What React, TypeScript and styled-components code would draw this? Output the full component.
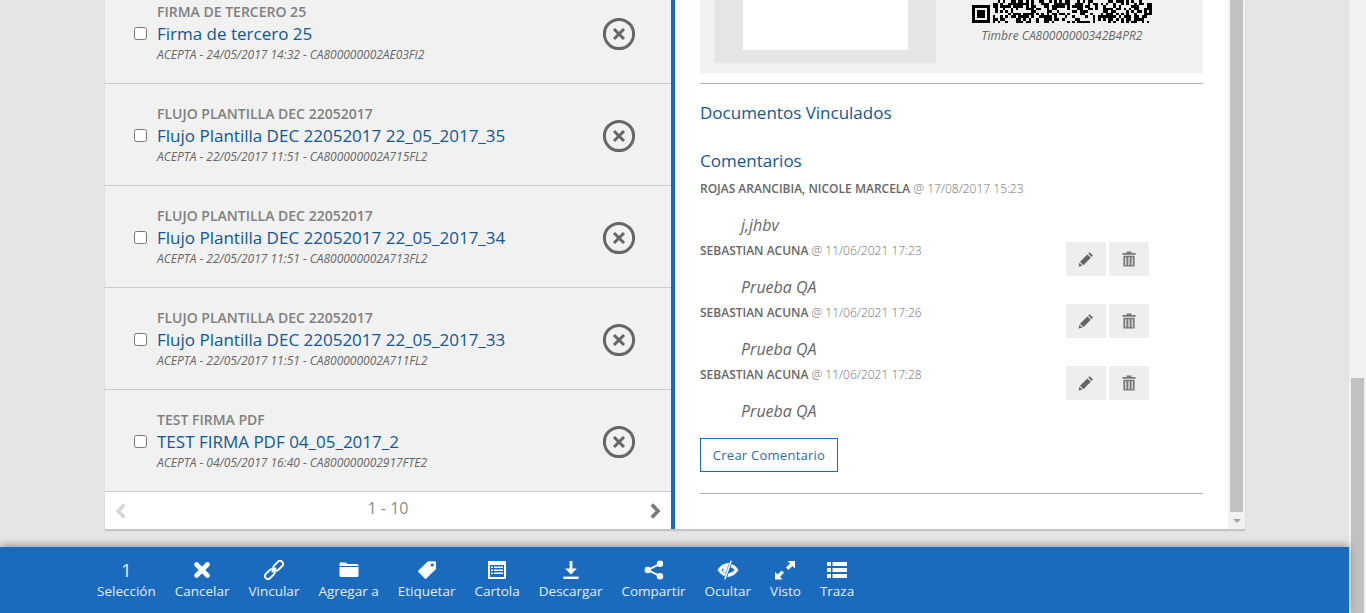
import React from 'react'
import type { ReactElement, ReactNode } from 'react'
import styled, { createGlobalStyle } from 'styled-components'

const GlobalStyle = createGlobalStyle`
    html, body {
        margin: 0;
        padding: 0;
        height: 100%;
        overflow: hidden;
        background: #e5e5e5;
        font-family: "Open Sans", "Liberation Sans", sans-serif;
    }
`

const Page = styled.div`
    display: flex;
    width: 1366px;
    height: 613px;
    overflow: hidden;
`

const Viewport = styled.div`
    display: flex;
    flex-direction: column;
    width: 1349px;
`

const Content = styled.div`
    flex: 1;
    padding-left: 105px;
    min-height: 0;
`

const Panel = styled.div`
    display: flex;
    width: 1140px;
    height: 529px;
    box-shadow: 0 2px 1px #c4c4c4;
`

const ListColumn = styled.div`
    display: flex;
    flex-direction: column;
    width: 566px;
    height: 529px;
    background: #fff;
    overflow: hidden;
    border-right: 4px solid #1a6bbd;
    flex-shrink: 0;
`

const List = styled.div`
    flex: 1;
    min-height: 0;
    margin-top: -18px;
`

const Row = styled.div`
    display: flex;
    align-items: center;
    box-sizing: border-box;
    height: 102px;
    padding: 2px 35px 0 29px;
    background: #f1f1f1;
    border-bottom: 1px solid #ccc;
`

const RowCheck = styled.input`
    width: 13px;
    height: 13px;
    margin: 0 10px 0 0;
    flex-shrink: 0;
`

const RowText = styled.div`
    flex: 1;
    min-width: 0;
    margin-bottom: 1px;
`

const RowTitle = styled.div`
    font-size: 14px;
    line-height: 18px;
    font-weight: 600;
    color: #808080;
    margin-bottom: 1px;
`

const RowName = styled.div`
    font-size: 17px;
    line-height: 24px;
    color: #0f5797;
`

const RowMeta = styled.div`
    margin-top: 1px;
    font-size: 12px;
    line-height: 16px;
    font-style: italic;
    letter-spacing: -0.02px;
    color: #666;
`

const Pager = styled.div`
    display: flex;
    align-items: center;
    justify-content: space-between;
    height: 37px;
    padding: 0 9px;
    flex-shrink: 0;
    font-size: 16px;
    color: #8a8a8a;
`

const PagerLabel = styled.span`
    margin-bottom: 5px;
`

const DetailColumn = styled.div`
    flex: 1;
    min-width: 0;
    box-sizing: border-box;
    padding: 0 25px;
    background: #fff;
    overflow: hidden;
`

const StampBox = styled.div`
    display: flex;
    height: 73px;
    background: #f1f1f1;
    padding-left: 15px;
`

const SignBox = styled.div`
    display: flex;
    justify-content: center;
    width: 221px;
    height: 63px;
    background: #e5e5e5;
`

const SignSheet = styled.div`
    width: 165px;
    height: 50px;
    background: #fff;
`

const StampCode = styled.div`
    display: flex;
    flex-direction: column;
    align-items: center;
    margin-left: 36px;
    width: 180px;
`

const StampCaption = styled.div`
    margin-top: 5px;
    font-size: 12px;
    line-height: 16px;
    font-style: italic;
    color: #666;
    white-space: nowrap;
`

const Rule = styled.div<{ $top: number }>`
    height: 1px;
    margin-top: ${(p) => p.$top}px;
    background: #b3b3b3;
`

const SectionTitle = styled.div<{ $top: number }>`
    margin-top: ${(p) => p.$top}px;
    font-size: 17px;
    line-height: 24px;
    color: #0f5797;
`

const Comments = styled.div`
    margin-top: 7px;
`

const CommentHead = styled.div`
    display: flex;
    justify-content: space-between;
    height: 34px;
    padding-right: 54px;
`

const CommentMeta = styled.div`
    padding-top: 1px;
    font-size: 12px;
    line-height: 16px;
    font-weight: 300;
    color: #6f6f6f;
`

const CommentAuthor = styled.span`
    font-weight: 600;
    color: #666;
`

const CommentBody = styled.div`
    height: 22px;
    margin-bottom: 6px;
    padding-left: 41px;
    font-size: 16px;
    line-height: 22px;
    font-style: italic;
    color: #666;
`

const CommentActions = styled.div`
    display: flex;
    gap: 3px;
`

const ActionButton = styled.div`
    display: flex;
    align-items: center;
    justify-content: center;
    width: 40px;
    height: 34px;
    background: #eee;
`

const CreateButton = styled.div`
    display: flex;
    align-items: center;
    justify-content: center;
    box-sizing: border-box;
    width: 138px;
    height: 34px;
    margin-top: 16px;
    border: 1px solid #1a6bbd;
    font-size: 13px;
    letter-spacing: 0.25px;
    color: #2b6cab;
`

const ScrollTrack = styled.div<{ $width: number }>`
    display: flex;
    flex-direction: column;
    width: ${(p) => p.$width}px;
    flex-shrink: 0;
    box-sizing: border-box;
    background: #f1f1f1;
    padding: 0 2px;
`

const ScrollGap = styled.div`
    height: 378px;
`

const ScrollThumb = styled.div`
    flex: 1;
    background: #c1c1c1;
`

const ScrollArrow = styled.div`
    display: flex;
    align-items: center;
    justify-content: center;
    height: 17px;
`

const ArrowGlyph = styled.div`
    width: 0;
    height: 0;
    border-left: 4px solid transparent;
    border-right: 4px solid transparent;
    border-top: 4px solid #a3a3a3;
`

const Footer = styled.div`
    display: flex;
    gap: 19px;
    height: 66px;
    box-sizing: border-box;
    padding: 11px 0 0 97px;
    flex-shrink: 0;
    background: #1a6bbd;
    box-shadow: 0 -2px 8px rgba(0, 0, 0, 0.35);
    position: relative;
`

const Tool = styled.div`
    display: flex;
    flex-direction: column;
    align-items: center;
    color: #fff;
`

const ToolIcon = styled.div`
    display: flex;
    align-items: center;
    justify-content: center;
    height: 24px;
    font-size: 19px;
    line-height: 24px;
    color: #e8f0f8;
`

const ToolLabel = styled.div`
    margin-top: -1px;
    font-size: 13.5px;
    line-height: 20px;
    color: #e3ecf6;
    white-space: nowrap;
`

const Glyph = ({ size, width, fill, children }: { size: number, width?: number, fill: string, children: ReactNode }): ReactElement => (
    <svg width={width ?? size} height={size} viewBox={`0 0 ${width ?? size} ${size}`} fill={fill} style={{ display: 'block' }}>
        {children}
    </svg>
)

const IconClose = (): ReactElement => (
    <Glyph size={34} fill="none">
        <circle cx="17" cy="17" r="14.6" stroke="#666" strokeWidth="3" />
        <path d="M12 12 L22 22 M22 12 L12 22" stroke="#666" strokeWidth="3" />
    </Glyph>
)

const IconPencil = (): ReactElement => (
    <Glyph size={16} fill="#666">
        <path d="M11.6 1.2 L15 4.6 L13.6 6 L10.2 2.6 Z M9.4 3.4 L12.8 6.8 L5.4 14.2 L2 10.8 Z M1.4 11.8 L4.4 14.8 L0.6 15.6 Z" />
    </Glyph>
)

const IconTrash = (): ReactElement => (
    <Glyph size={16} fill="#777">
        <path d="M5.6 0.6 H10.4 V2 H14.6 V3.8 H1.4 V2 H5.6 Z" />
        <path d="M2.4 4.8 H13.6 V15.6 H2.4 Z M4.2 6.2 V14.2 H5.4 V6.2 Z M7.4 6.2 V14.2 H8.6 V6.2 Z M10.6 6.2 V14.2 H11.8 V6.2 Z" fillRule="evenodd" />
    </Glyph>
)

const IconChevron = ({ left, color }: { left?: boolean, color: string }): ReactElement => (
    <Glyph size={16} width={14} fill="none">
        <path d={left ? 'M10.4 1.6 L4.2 8 L10.4 14.4' : 'M3.8 1.6 L10 8 L3.8 14.4'} stroke={color} strokeWidth="3.6" />
    </Glyph>
)

const IconCancel = (): ReactElement => (
    <Glyph size={20} fill="none">
        <path d="M4.5 4.5 L15.5 15.5 M15.5 4.5 L4.5 15.5" stroke="#fff" strokeWidth="4.6" strokeLinecap="round" />
    </Glyph>
)

const IconLink = (): ReactElement => (
    <Glyph size={20} fill="none">
        <g stroke="#fff" strokeWidth="2" transform="rotate(-45 10 10)">
            <rect x="-1.5" y="7" width="11" height="6" rx="3" />
            <rect x="10.5" y="7" width="11" height="6" rx="3" />
            <path d="M7 10 H13" />
        </g>
    </Glyph>
)

const IconFolder = (): ReactElement => (
    <Glyph size={20} fill="#fff">
        <path d="M0.5 3.5 Q0.5 2.5 1.5 2.5 H7 L8.5 4 H17.5 Q19.5 4 19.5 5.5 V6 H0.5 Z" />
        <path d="M0.5 7 H19.5 V16 Q19.5 17 18 17 H2 Q0.5 17 0.5 16 Z" />
    </Glyph>
)

const IconTag = (): ReactElement => (
    <Glyph size={20} fill="#fff">
        <path fillRule="evenodd" d="M11 1.2 H18 Q19 1.2 19 2.2 V9 L9.4 18.4 Q8.6 19.2 7.8 18.4 L1.4 12 Q0.6 11.2 1.4 10.4 Z M15.2 3.4 A1.6 1.6 0 1 0 15.21 3.4 Z" />
    </Glyph>
)

const IconStatement = (): ReactElement => (
    <Glyph size={20} fill="#fff">
        <path fillRule="evenodd" d="M1 1 H19 V19 H1 Z M3 5 V17 H17 V5 Z" />
        <path d="M4 6.5 H6 V8 H4 Z M7 6.5 H16 V8 H7 Z M4 9.5 H6 V11 H4 Z M7 9.5 H16 V11 H7 Z M4 12.5 H6 V14 H4 Z M7 12.5 H16 V14 H7 Z" />
    </Glyph>
)

const IconDownload = (): ReactElement => (
    <Glyph size={20} fill="#fff">
        <path d="M8.6 1 H11.4 V8.5 H15.8 L10 14.4 L4.2 8.5 H8.6 Z" />
        <rect x="2.4" y="16.6" width="15.2" height="2.4" />
    </Glyph>
)

const IconShare = (): ReactElement => (
    <Glyph size={20} fill="#fff">
        <circle cx="16" cy="3.8" r="3.2" />
        <circle cx="16" cy="16.2" r="3.2" />
        <circle cx="3.8" cy="10" r="3.2" />
        <path d="M3.8 10 L16 3.8 M3.8 10 L16 16.2" stroke="#fff" strokeWidth="1.9" />
    </Glyph>
)

const IconEyeOff = (): ReactElement => (
    <Glyph size={20} width={22} fill="#fff">
        <path fillRule="evenodd" d="M0.5 10 Q4.6 3.6 11 3 Q17.4 3.6 21.5 10 Q17.4 16.4 11 17 Q4.6 16.4 0.5 10 Z M11 6.6 Q15.4 7.2 17.8 10 Q15.4 12.8 11 13.4 Q6.6 12.8 4.2 10 Q6.6 7.2 11 6.6 Z" />
        <circle cx="9.2" cy="9.6" r="3" />
        <path d="M14.4 0.8 L8 19.2" stroke="#1a6bbd" strokeWidth="2.8" />
        <path d="M14.2 0.8 L7.8 19.2" stroke="#fff" strokeWidth="1.5" />
    </Glyph>
)

const IconExpand = (): ReactElement => (
    <Glyph size={20} width={22} fill="#fff">
        <path d="M13.4 1 H21 V8.6 L18.4 6 L14.4 10 L12 7.6 L16 3.6 Z" />
        <path d="M1 19.4 V11.8 L3.6 14.4 L7.6 10.4 L10 12.8 L6 16.8 L8.6 19.4 Z" />
    </Glyph>
)

const IconList = (): ReactElement => (
    <Glyph size={20} width={20} fill="#fff">
        <path d="M0 2 H4 V6 H0 Z M5.5 2 H20 V6 H5.5 Z M0 8 H4 V12 H0 Z M5.5 8 H20 V12 H5.5 Z M0 14 H4 V18 H0 Z M5.5 14 H20 V18 H5.5 Z" />
    </Glyph>
)

// visible bottom rows of the code, the rest is scrolled away
const qrCells = (): ReactElement[] => {
    const cell = 180 / 70
    const cells: ReactElement[] = []
    let seed = 4217
    for (let y = 0; y < 9; y++) {
        let on = false
        for (let x = 8; x < 70; x++) {
            seed = (seed * 1103 + 12345) % 65536
            if ((seed >> 4) % 100 < 55) on = !on
            if (on) {
                cells.push(<rect key={`${x}-${y}`} x={x * cell} y={y * cell} width={cell} height={cell} />)
            }
        }
    }
    return cells
}

const StampQr = (): ReactElement => (
    <svg width="180" height="23" viewBox="0 0 180 23" fill="#000" shapeRendering="crispEdges" style={{ display: 'block' }}>
        <path fillRule="evenodd" d="M0 5 H18 V23 H0 Z M2.6 7.6 V20.4 H15.4 V7.6 Z" />
        <rect x="5.2" y="10.2" width="7.7" height="7.7" />
        {qrCells()}
    </svg>
)

const rows = [
    { title: 'FIRMA DE TERCERO 25', name: 'Firma de tercero 25', meta: 'ACEPTA - 24/05/2017 14:32 - CA800000002AE03FI2' },
    { title: 'FLUJO PLANTILLA DEC 22052017', name: 'Flujo Plantilla DEC 22052017 22_05_2017_35', meta: 'ACEPTA - 22/05/2017 11:51 - CA800000002A715FL2' },
    { title: 'FLUJO PLANTILLA DEC 22052017', name: 'Flujo Plantilla DEC 22052017 22_05_2017_34', meta: 'ACEPTA - 22/05/2017 11:51 - CA800000002A713FL2' },
    { title: 'FLUJO PLANTILLA DEC 22052017', name: 'Flujo Plantilla DEC 22052017 22_05_2017_33', meta: 'ACEPTA - 22/05/2017 11:51 - CA800000002A711FL2' },
    { title: 'TEST FIRMA PDF', name: 'TEST FIRMA PDF 04_05_2017_2', meta: 'ACEPTA - 04/05/2017 16:40 - CA800000002917FTE2' },
]

const comments = [
    { author: 'ROJAS ARANCIBIA, NICOLE MARCELA', date: '17/08/2017 15:23', body: 'j,jhbv', own: false },
    { author: 'SEBASTIAN ACUNA', date: '11/06/2021 17:23', body: 'Prueba QA', own: true },
    { author: 'SEBASTIAN ACUNA', date: '11/06/2021 17:26', body: 'Prueba QA', own: true },
    { author: 'SEBASTIAN ACUNA', date: '11/06/2021 17:28', body: 'Prueba QA', own: true },
]

const tools: { label: string, icon: ReactNode }[] = [
    { label: 'Selección', icon: '1' },
    { label: 'Cancelar', icon: <IconCancel /> },
    { label: 'Vincular', icon: <IconLink /> },
    { label: 'Agregar a', icon: <IconFolder /> },
    { label: 'Etiquetar', icon: <IconTag /> },
    { label: 'Cartola', icon: <IconStatement /> },
    { label: 'Descargar', icon: <IconDownload /> },
    { label: 'Compartir', icon: <IconShare /> },
    { label: 'Ocultar', icon: <IconEyeOff /> },
    { label: 'Visto', icon: <IconExpand /> },
    { label: 'Traza', icon: <IconList /> },
]

export default function App (): ReactElement {

    return (
        <Page>
            <GlobalStyle />
            <Viewport>
                <Content>
                    <Panel>
                        <ListColumn>
                            <List>
                                {rows.map ((r, k) => (
                                    <Row key={k}>
                                        <RowCheck type="checkbox" />
                                        <RowText>
                                            <RowTitle>{r.title}</RowTitle>
                                            <RowName>{r.name}</RowName>
                                            <RowMeta>{r.meta}</RowMeta>
                                        </RowText>
                                        <IconClose />
                                    </Row>
                                ))}
                            </List>
                            <Pager>
                                <IconChevron left color="#d6d6d6" />
                                <PagerLabel>1 - 10</PagerLabel>
                                <IconChevron color="#7a7a7a" />
                            </Pager>
                        </ListColumn>
                        <DetailColumn>
                            <StampBox>
                                <SignBox>
                                    <SignSheet />
                                </SignBox>
                                <StampCode>
                                    <StampQr />
                                    <StampCaption>Timbre CA80000000342B4PR2</StampCaption>
                                </StampCode>
                            </StampBox>
                            <Rule $top={10} />
                            <SectionTitle $top={17}>Documentos Vinculados</SectionTitle>
                            <SectionTitle $top={24}>Comentarios</SectionTitle>
                            <Comments>
                                {comments.map ((c, k) => (
                                    <div key={k}>
                                        <CommentHead>
                                            <CommentMeta>
                                                <CommentAuthor>{c.author}</CommentAuthor> @ {c.date}
                                            </CommentMeta>
                                            {c.own && (
                                                <CommentActions>
                                                    <ActionButton><IconPencil /></ActionButton>
                                                    <ActionButton><IconTrash /></ActionButton>
                                                </CommentActions>
                                            )}
                                        </CommentHead>
                                        <CommentBody>{c.body}</CommentBody>
                                    </div>
                                ))}
                            </Comments>
                            <CreateButton>Crear Comentario</CreateButton>
                            <Rule $top={21} />
                        </DetailColumn>
                        <ScrollTrack $width={17}>
                            <ScrollThumb />
                            <ScrollArrow><ArrowGlyph /></ScrollArrow>
                        </ScrollTrack>
                    </Panel>
                </Content>
                <Footer>
                    {tools.map ((t, k) => (
                        <Tool key={k}>
                            <ToolIcon>{t.icon}</ToolIcon>
                            <ToolLabel>{t.label}</ToolLabel>
                        </Tool>
                    ))}
                </Footer>
            </Viewport>
            <ScrollTrack $width={17}>
                <ScrollGap />
                <ScrollThumb />
            </ScrollTrack>
        </Page>
    )

}
